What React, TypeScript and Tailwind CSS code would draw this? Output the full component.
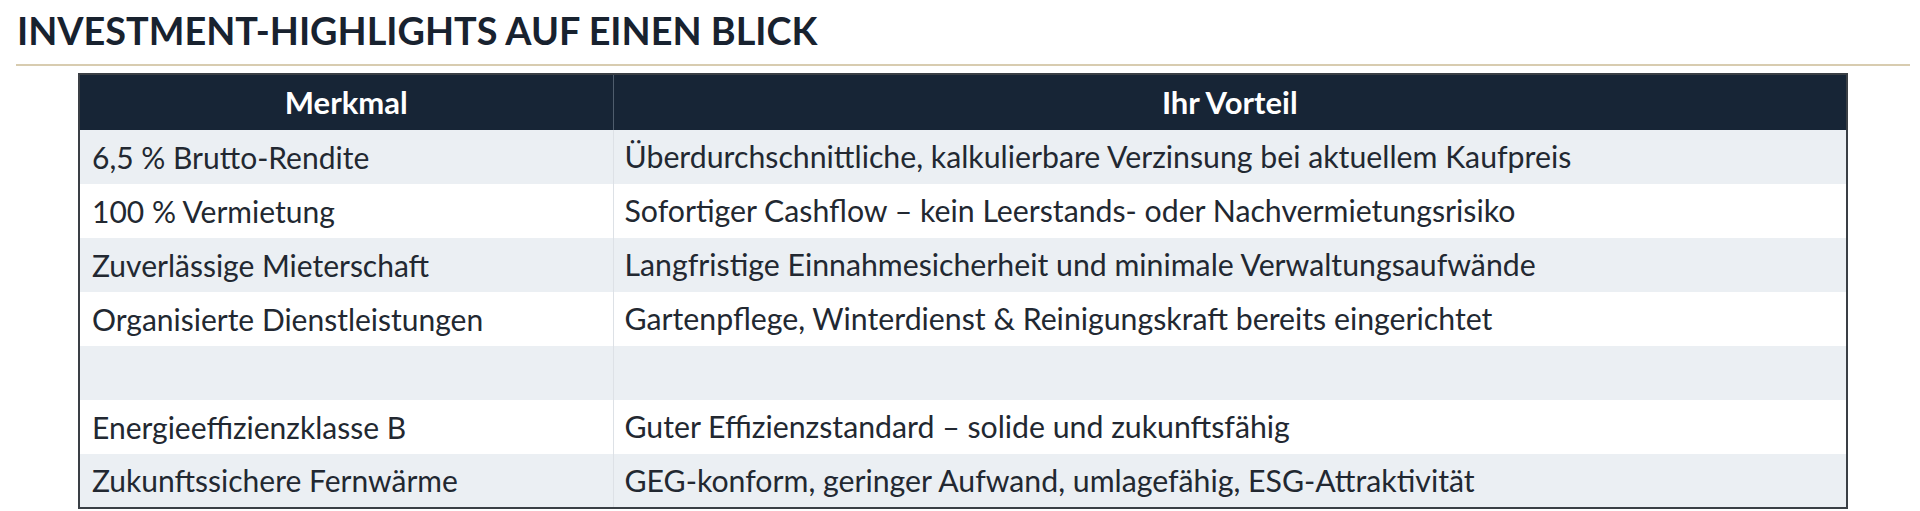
const rows: [string, string][] = [
  ['6,5 % Brutto-Rendite', 'Überdurchschnittliche, kalkulierbare Verzinsung bei aktuellem Kaufpreis'],
  ['100 % Vermietung', 'Sofortiger Cashflow – kein Leerstands- oder Nachvermietungsrisiko'],
  ['Zuverlässige Mieterschaft', 'Langfristige Einnahmesicherheit und minimale Verwaltungsaufwände'],
  ['Organisierte Dienstleistungen', 'Gartenpflege, Winterdienst & Reinigungskraft bereits eingerichtet'],
  ['', ''],
  ['Energieeffizienzklasse B', 'Guter Effizienzstandard – solide und zukunftsfähig'],
  ['Zukunftssichere Fernwärme', 'GEG-konform, geringer Aufwand, umlagefähig, ESG-Attraktivität'],
];

export default function App() {
  return (
    <div className="min-h-[511px] bg-white font-['Lato','Liberation_Sans',sans-serif] pt-[9px]">
      <h1 className="pl-[17px] text-[37.8px] leading-[44px] font-bold text-[#18222f]">
        INVESTMENT-HIGHLIGHTS AUF EINEN BLICK
      </h1>
      <div className="mt-[11px] ml-[16px] w-[1894px] h-[2px] bg-[#d8ccb0]" />

      <table className="mt-[7px] ml-[78px] w-[1770px] border-collapse border-2 border-[#3a3f45] table-fixed">
        <colgroup>
          <col className="w-[534px]" />
          <col />
        </colgroup>
        <thead>
          <tr className="h-[56px] bg-[#172536] text-white">
            <th className="text-[31px] font-bold text-center border-r border-[#4f5d6d]">Merkmal</th>
            <th className="text-[31px] font-bold text-center">Ihr Vorteil</th>
          </tr>
        </thead>
        <tbody>
          {rows.map(([a, b], i) => (
            <tr key={i} className={`h-[54px] ${i % 2 === 0 ? 'bg-[#ebeff3]' : 'bg-white'}`}>
              <td className="px-[12px] text-[30px] text-[#222831] border-r border-[#dde1e6]">{a}</td>
              <td className="px-[11px] text-[30.25px] text-[#222831]">{b}</td>
            </tr>
          ))}
        </tbody>
      </table>
    </div>
  );
}
